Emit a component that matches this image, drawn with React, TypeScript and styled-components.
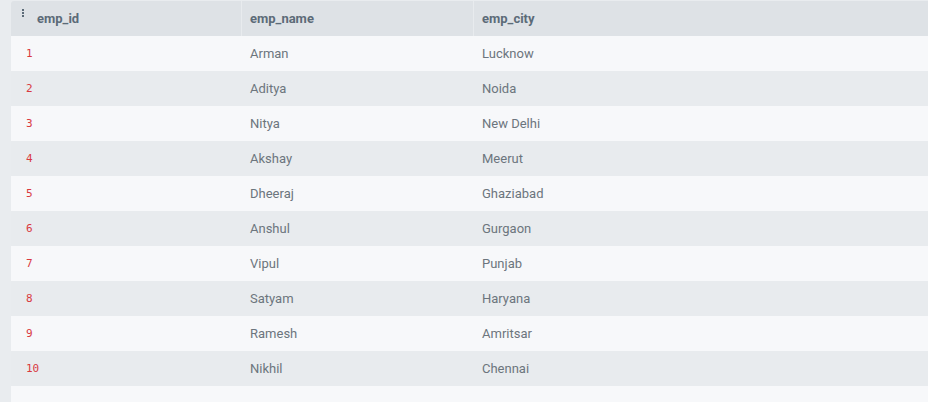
import React from "react";
import styled, { createGlobalStyle } from "styled-components";

const Global = createGlobalStyle`
  html, body { margin: 0; padding: 0; background: #e9ecef; }
  body { font-family: Roboto, "Liberation Sans", sans-serif; }
`;

const Wrap = styled.div`
  padding: 1px 0 0 11px;
  height: 402px;
  box-sizing: border-box;
  overflow: hidden;
`;

const Table = styled.div`
  display: grid;
  grid-template-columns: 231px 232px 1fr;
  border-top-left-radius: 3px;
  overflow: hidden;
`;

const HeadCell = styled.div<{ $last?: boolean }>`
  height: 35px;
  display: flex;
  align-items: center;
  gap: 10px;
  padding-left: 8px;
  box-sizing: border-box;
  background: #dee2e6;
  color: #5c6b78;
  font-size: 13px;
  font-weight: 700;
  border-right: ${(p) => (p.$last ? "none" : "1px solid #e8ebee")};
  &:first-child { padding-left: 8px; }
`;

const Cell = styled.div<{ $even: boolean; $mono?: boolean }>`
  height: 35px;
  display: flex;
  align-items: center;
  padding-left: ${(p) => (p.$mono ? "15px" : "8px")};
  box-sizing: border-box;
  background: ${(p) => (p.$even ? "#e8ebee" : "#f7f8fa")};
  color: ${(p) => (p.$mono ? "#d9393f" : "#6c757d")};
  font-family: ${(p) => (p.$mono ? '"DejaVu Sans Mono", "Liberation Mono", monospace' : 'Roboto, "Liberation Sans", sans-serif')};
  font-size: ${(p) => (p.$mono ? "11px" : "13px")};
`;

const Filler = styled.div`
  grid-column: 1 / -1;
  height: 20px;
  background: #f7f8fa;
`;

const Grip = () => (
  <svg width="8" height="14" viewBox="0 0 8 14" style={{ marginTop: -8 }}>
    <rect x="3" y="1" width="2" height="2" fill="#5c6b78" />
    <rect x="3" y="4" width="2" height="2" fill="#5c6b78" />
    <rect x="3" y="7" width="2" height="2" fill="#5c6b78" />
  </svg>
);

const rows: [string, string][] = [
  ["Arman", "Lucknow"],
  ["Aditya", "Noida"],
  ["Nitya", "New Delhi"],
  ["Akshay", "Meerut"],
  ["Dheeraj", "Ghaziabad"],
  ["Anshul", "Gurgaon"],
  ["Vipul", "Punjab"],
  ["Satyam", "Haryana"],
  ["Ramesh", "Amritsar"],
  ["Nikhil", "Chennai"],
];

export default function App() {
  return (
    <>
      <Global />
      <Wrap>
        <Table>
          <HeadCell>
            <Grip />
            emp_id
          </HeadCell>
          <HeadCell>emp_name</HeadCell>
          <HeadCell $last>emp_city</HeadCell>
          {rows.map(([name, city], i) => (
            <React.Fragment key={i}>
              <Cell $even={i % 2 === 1} $mono>{i + 1}</Cell>
              <Cell $even={i % 2 === 1}>{name}</Cell>
              <Cell $even={i % 2 === 1}>{city}</Cell>
            </React.Fragment>
          ))}
          <Filler />
        </Table>
      </Wrap>
    </>
  );
}
